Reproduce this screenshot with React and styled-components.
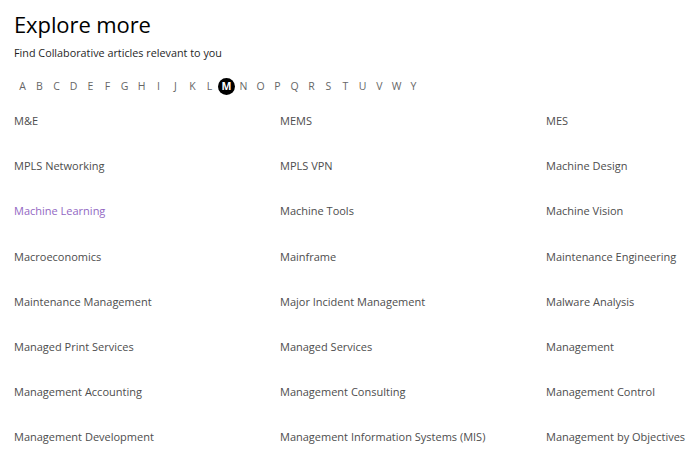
import React from "react";
import styled, { createGlobalStyle } from "styled-components";

const Global = createGlobalStyle`
  html, body { margin: 0; padding: 0; background: #fff; overflow: hidden; }
  body { font-family: "Open Sans", "Noto Sans", sans-serif; }
`;

const Page = styled.div`
  width: 700px;
  height: 463px;
  padding: 0 14px;
  box-sizing: border-box;
  overflow: hidden;
`;

const Title = styled.h1`
  margin: 0;
  padding-top: 8px;
  font-size: 22px;
  line-height: 32px;
  font-weight: 400;
  color: #000;
  letter-spacing: -0.1px;
`;

const Subtitle = styled.p`
  margin: 4px 0 0;
  font-size: 10.8px;
  line-height: 18px;
  color: #1f1f1f;
`;

const Letters = styled.ul`
  list-style: none;
  margin: 15px 0 0;
  padding: 0;
  display: flex;
  height: 18px;
  align-items: center;
`;

const Letter = styled.li`
  width: 17px;
  display: flex;
  justify-content: center;
  align-items: center;
  font-size: 10.5px;
  color: ${(p) => (p.$active ? "#fff" : "#666")};
  font-weight: ${(p) => (p.$active ? 700 : 400)};
  span {
    display: inline-flex;
    align-items: center;
    justify-content: center;
    width: 17px;
    height: 17px;
    border-radius: 50%;
    background: ${(p) => (p.$active ? "#000" : "transparent")};
  }
`;

const Grid = styled.div`
  margin-top: 17px;
  display: grid;
  grid-template-columns: repeat(3, 250px);
  column-gap: 16px;
  grid-auto-rows: 45.2px;
  align-items: start;
`;

const Item = styled.a`
  font-size: 11px;
  line-height: 18px;
  color: ${(p) => (p.$visited ? "#9267c3" : "#4d4d4d")};
  text-decoration: none;
  white-space: nowrap;
`;

const letters = "ABCDEFGHIJKLMNOPQRSTUVWY".split("");

const items = [
  "M&E", "MEMS", "MES",
  "MPLS Networking", "MPLS VPN", "Machine Design",
  "Machine Learning", "Machine Tools", "Machine Vision",
  "Macroeconomics", "Mainframe", "Maintenance Engineering",
  "Maintenance Management", "Major Incident Management", "Malware Analysis",
  "Managed Print Services", "Managed Services", "Management",
  "Management Accounting", "Management Consulting", "Management Control",
  "Management Development", "Management Information Systems (MIS)", "Management by Objectives",
];

export default function App() {
  return (
    <Page>
      <Global />
      <Title>Explore more</Title>
      <Subtitle>Find Collaborative articles relevant to you</Subtitle>
      <Letters>
        {letters.map((l) => (
          <Letter key={l} $active={l === "M"}>
            <span>{l}</span>
          </Letter>
        ))}
      </Letters>
      <Grid>
        {items.map((t) => (
          <Item key={t} href="#" $visited={t === "Machine Learning"}>
            {t}
          </Item>
        ))}
      </Grid>
    </Page>
  );
}
